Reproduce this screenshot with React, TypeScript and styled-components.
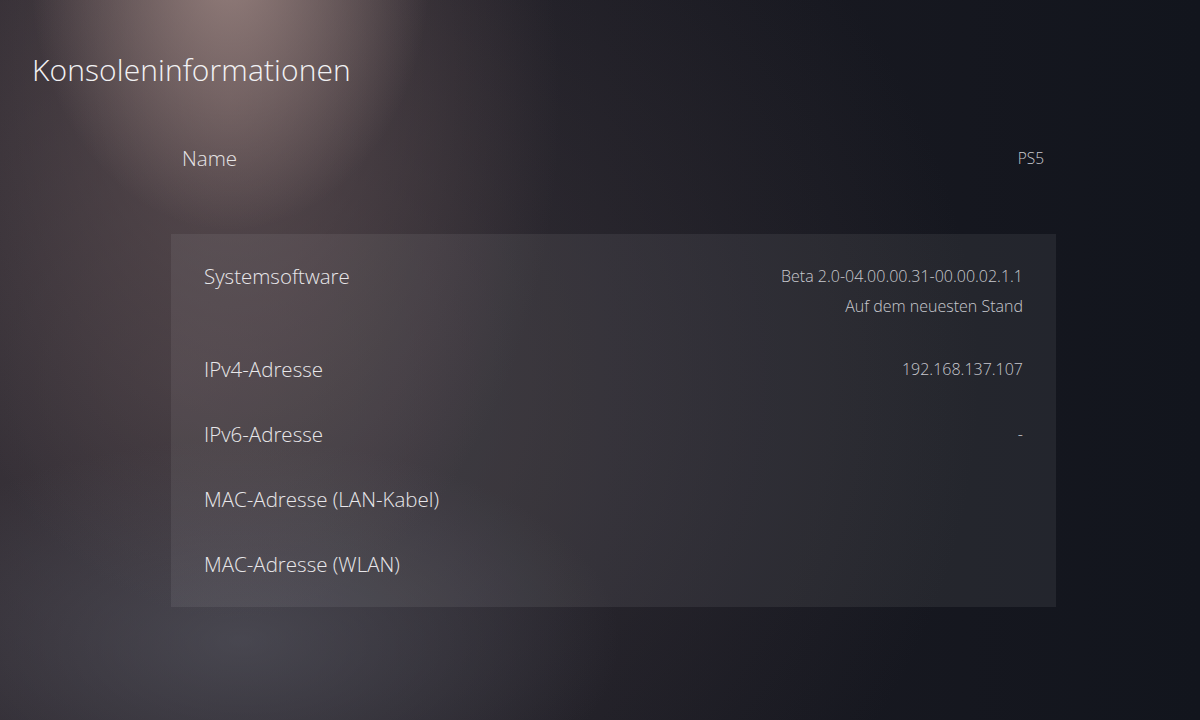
import styled, { createGlobalStyle } from 'styled-components';

const GlobalStyle = createGlobalStyle`
  html, body {
    margin: 0;
    padding: 0;
    background: #13151d;
  }
  #root {
    width: 1200px;
    height: 720px;
  }
`;

const Screen = styled.div`
  width: 1200px;
  height: 720px;
  overflow: hidden;
  box-sizing: border-box;
  font-family: 'Open Sans', 'Noto Sans', sans-serif;
  font-weight: 300;
  color: #ececee;
  background:
    radial-gradient(ellipse 200px 260px at 230px -30px, rgba(170, 145, 140, 0.75), rgba(170, 145, 140, 0) 100%),
    radial-gradient(ellipse 330px 520px at 230px 100px, rgba(115, 95, 96, 0.55), rgba(115, 95, 96, 0) 100%),
    radial-gradient(ellipse 380px 200px at 240px 640px, rgba(95, 97, 108, 0.5), rgba(95, 97, 108, 0) 100%),
    radial-gradient(ellipse 800px 700px at 180px 380px, rgba(70, 62, 68, 0.7), rgba(70, 62, 68, 0) 100%),
    linear-gradient(90deg, #25222a 0%, #1a1a22 50%, #12151d 100%);
  padding-top: 50px;
`;

const Title = styled.h1`
  margin: 0 0 53px 32px;
  font-size: 30px;
  line-height: 40px;
  font-weight: 300;
  color: #f2f2f4;
  letter-spacing: 0.1px;
`;

const Content = styled.div`
  margin: 0 144px 0 171px;
  display: flex;
  flex-direction: column;
  gap: 61px;
`;

const NameRow = styled.div`
  display: flex;
  justify-content: space-between;
  align-items: center;
  padding: 0 12px 0 11px;
  height: 30px;
`;

const NameLabel = styled.span`
  font-size: 20.5px;
  color: #e6e4e6;
`;

const NameValue = styled.span`
  font-size: 15.5px;
  color: #c9cad0;
`;

const Panel = styled.div`
  background: rgba(255, 255, 255, 0.065);
  padding: 10px 33px 10px 33px;
  display: flex;
  flex-direction: column;
`;

const Row = styled.div`
  display: flex;
  justify-content: space-between;
  align-items: flex-start;
  padding: 17px 0;
`;

const Label = styled.span`
  font-size: 20.5px;
  line-height: 31px;
  color: #e8e7ea;
`;

const Values = styled.div`
  display: flex;
  flex-direction: column;
  align-items: flex-end;
`;

const Value = styled.span<{ $sub?: boolean }>`
  font-size: 16px;
  line-height: ${(p) => (p.$sub ? '28px' : '31px')};
  color: #c8c9cf;
`;

const rows: { label: string; values: string[] }[] = [
  { label: 'Systemsoftware', values: ['Beta 2.0-04.00.00.31-00.00.02.1.1', 'Auf dem neuesten Stand'] },
  { label: 'IPv4-Adresse', values: ['192.168.137.107'] },
  { label: 'IPv6-Adresse', values: ['-'] },
  { label: 'MAC-Adresse (LAN-Kabel)', values: [] },
  { label: 'MAC-Adresse (WLAN)', values: [] },
];

export default function App() {
  return (
    <>
      <GlobalStyle />
      <Screen>
        <Title>Konsoleninformationen</Title>
        <Content>
          <NameRow>
            <NameLabel>Name</NameLabel>
            <NameValue>PS5</NameValue>
          </NameRow>
          <Panel>
            {rows.map((r) => (
              <Row key={r.label}>
                <Label>{r.label}</Label>
                <Values>
                  {r.values.map((v, i) => (
                    <Value key={i} $sub={i > 0}>
                      {v}
                    </Value>
                  ))}
                </Values>
              </Row>
            ))}
          </Panel>
        </Content>
      </Screen>
    </>
  );
}
